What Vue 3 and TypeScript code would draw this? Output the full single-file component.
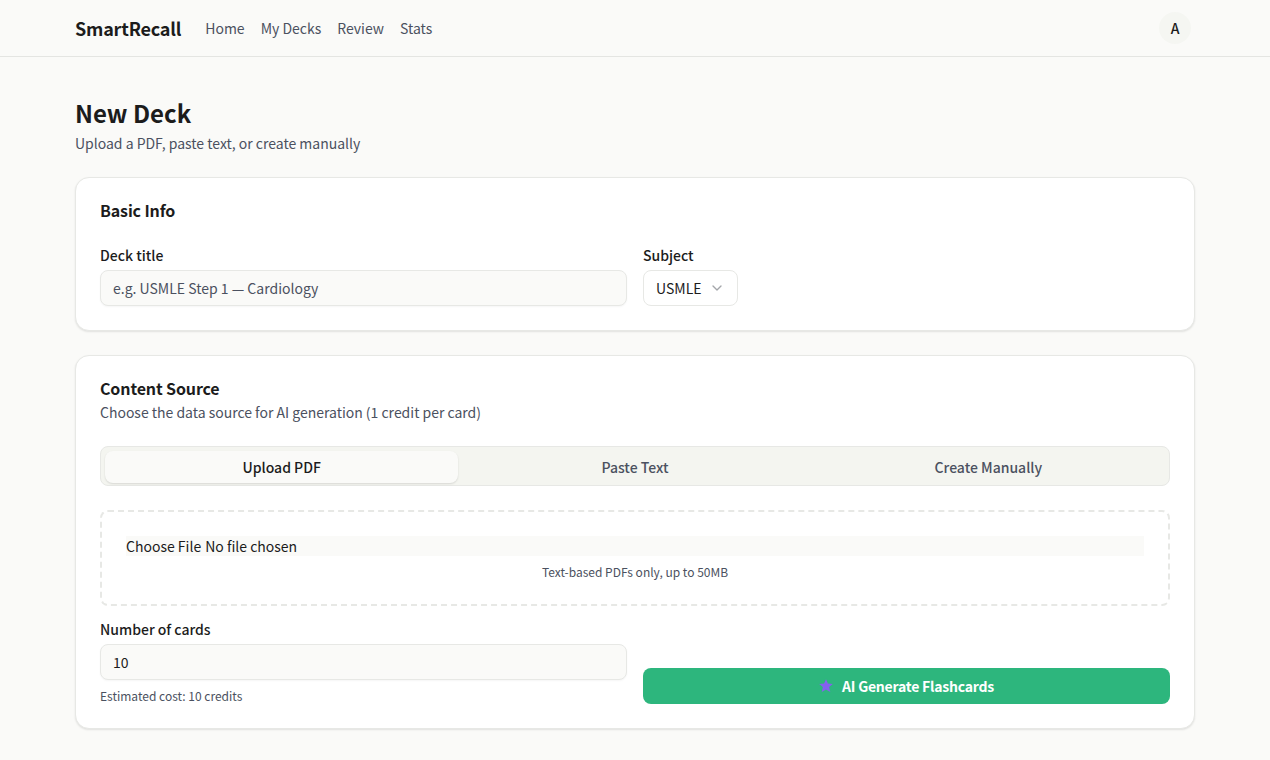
<script setup lang="ts">
import { computed, ref } from 'vue'

const links: string[] = ['Home', 'My Decks', 'Review', 'Stats']
const tabs: string[] = ['Upload PDF', 'Paste Text', 'Create Manually']
const activeTab = ref<string>('Upload PDF')
const title = ref<string>('')
const count = ref<string>('10')
const cost = computed<string>(() => `Estimated cost: ${count.value} credits`)
</script>

<template>
  <div class="page">
    <header class="header">
      <div class="bar">
        <a class="brand">SmartRecall</a>
        <nav class="nav">
          <a v-for="link in links" :key="link">{{ link }}</a>
        </nav>
        <div class="avatar">A</div>
      </div>
    </header>

    <main class="main">
      <h1 class="title">New Deck</h1>
      <p class="subtitle">Upload a PDF, paste text, or create manually</p>

      <section class="card info">
        <h2 class="card-title">Basic Info</h2>
        <div class="columns">
          <div class="field">
            <label class="label">Deck title</label>
            <input v-model="title" class="input" type="text" placeholder="e.g. USMLE Step 1 — Cardiology" />
          </div>
          <div class="field">
            <label class="label">Subject</label>
            <button class="select" type="button">
              <span>USMLE</span>
              <svg class="chevron" viewBox="0 0 24 24" fill="none" stroke="currentColor" stroke-width="2" stroke-linecap="round" stroke-linejoin="round">
                <path d="m6 9 6 6 6-6" />
              </svg>
            </button>
          </div>
        </div>
      </section>

      <section class="card source">
        <h2 class="card-title">Content Source</h2>
        <p class="card-text">Choose the data source for AI generation (1 credit per card)</p>

        <div class="tabs">
          <button
            v-for="tab in tabs"
            :key="tab"
            type="button"
            class="tab"
            :class="{ active: tab === activeTab }"
            @click="activeTab = tab"
          >{{ tab }}</button>
        </div>

        <div class="dropzone">
          <div class="file"><span>Choose File</span><span>No file chosen</span></div>
          <p class="hint center">Text-based PDFs only, up to 50MB</p>
        </div>

        <div class="columns bottom">
          <div class="field">
            <label class="label">Number of cards</label>
            <input v-model="count" class="input" type="text" />
            <p class="hint">{{ cost }}</p>
          </div>
          <button class="generate" type="button">
            <svg class="star" viewBox="0 0 14 14" fill="#8560f0">
              <path d="M7 .2 8.9 4.5 13.8 4.9 10.1 8 11.3 13 7 10.4 2.7 13 3.9 8 .2 4.9 5.1 4.5Z" />
            </svg>
            <span>AI Generate Flashcards</span>
          </button>
        </div>
      </section>
    </main>
  </div>
</template>

<style>
body {
  background: #fafaf8;
}
</style>

<style scoped>
.page,
.page * {
  box-sizing: border-box;
  margin: 0;
}
.page {
  height: 760px;
  overflow: hidden;
  background: #fafaf8;
  color: #1c1c1c;
  font-family: "Noto Sans CJK SC", "Noto Sans", sans-serif;
  font-size: 14px;
  line-height: 20px;
}
button,
input {
  font: inherit;
  color: inherit;
}
.header {
  height: 57px;
  border-bottom: 1px solid #e4e5e2;
}
.bar {
  width: 1120px;
  height: 56px;
  margin: 0 auto;
  display: flex;
  align-items: center;
}
.brand {
  font-size: 18px;
  line-height: 28px;
  font-weight: 700;
  letter-spacing: -0.2px;
}
.nav {
  display: flex;
  gap: 16px;
  margin-left: 24px;
  color: #4b5160;
}
.avatar {
  width: 32px;
  height: 32px;
  margin-left: auto;
  margin-right: 4px;
  display: grid;
  place-items: center;
  border-radius: 50%;
  background: #f5f6f2;
  font-weight: 500;
}
.main {
  width: 1120px;
  margin: 0 auto;
  padding-top: 40px;
}
.title {
  font-size: 24px;
  line-height: 32px;
  font-weight: 700;
}
.subtitle {
  margin-top: 4px;
  color: #4b5160;
  letter-spacing: -0.01px;
}
.card {
  margin-top: 24px;
  padding: 24px;
  border: 1px solid #e7e8e5;
  border-radius: 14px;
  background: #fff;
  box-shadow: 0 1px 2px rgba(0, 0, 0, 0.1);
}
.info {
  height: 154px;
}
.source {
  height: 374px;
}
.card-title {
  font-size: 16px;
  line-height: 16px;
  font-weight: 600;
  letter-spacing: -0.13px;
}
.card-text {
  margin-top: 6px;
  color: #4b5160;
  letter-spacing: -0.01px;
}
.columns {
  display: grid;
  grid-template-columns: 1fr 1fr;
  gap: 16px;
}
.info .columns {
  margin-top: 30px;
}
.field {
  display: flex;
  flex-direction: column;
  align-items: flex-start;
}
.label {
  line-height: 14px;
  margin-bottom: 8px;
  font-weight: 500;
}
.input {
  width: 100%;
  height: 36px;
  padding: 0 12px;
  border: 1px solid #e7e8e5;
  border-radius: 8px;
  outline: none;
  background: #fafaf8;
  box-shadow: 0 1px 2px rgba(0, 0, 0, 0.04);
}
.input::placeholder {
  color: #4b5160;
  opacity: 1;
}
.select {
  width: 95px;
  height: 36px;
  padding: 0 12px;
  display: flex;
  align-items: center;
  justify-content: space-between;
  border: 1px solid #e7e8e5;
  border-radius: 8px;
  background: #fff;
}
.chevron {
  width: 16px;
  height: 16px;
  color: #a4a6aa;
}
.tabs {
  height: 40px;
  margin-top: 24px;
  padding: 4px 4px 2px;
  display: grid;
  grid-template-columns: repeat(3, 1fr);
  border: 1px solid #e7e8e5;
  border-radius: 8px;
  background: #f4f5f0;
}
.tab {
  padding: 0;
  border: 0;
  border-radius: 8px;
  background: transparent;
  color: #4b5160;
  font-weight: 500;
}
.tab.active {
  background: #fafaf8;
  color: #1c1c1c;
  box-shadow: 0 1px 2px rgba(0, 0, 0, 0.12);
}
.dropzone {
  height: 96px;
  margin-top: 24px;
  padding: 24px;
  border: 2px dashed #e7e8e5;
  border-radius: 8px;
}
.file {
  height: 20px;
  display: flex;
  gap: 4px;
  background: #fafaf8;
}
.hint {
  margin-top: 8px;
  font-size: 12px;
  line-height: 16px;
  color: #4b5160;
}
.center {
  text-align: center;
}
.bottom {
  margin-top: 16px;
  align-items: end;
}
.generate {
  height: 36px;
  padding: 0;
  display: flex;
  align-items: center;
  justify-content: center;
  gap: 9px;
  border: 0;
  border-radius: 8px;
  background: #2db67d;
  color: #fff;
  font-weight: 600;
  letter-spacing: -0.22px;
}
.star {
  width: 14px;
  height: 14px;
}
</style>
